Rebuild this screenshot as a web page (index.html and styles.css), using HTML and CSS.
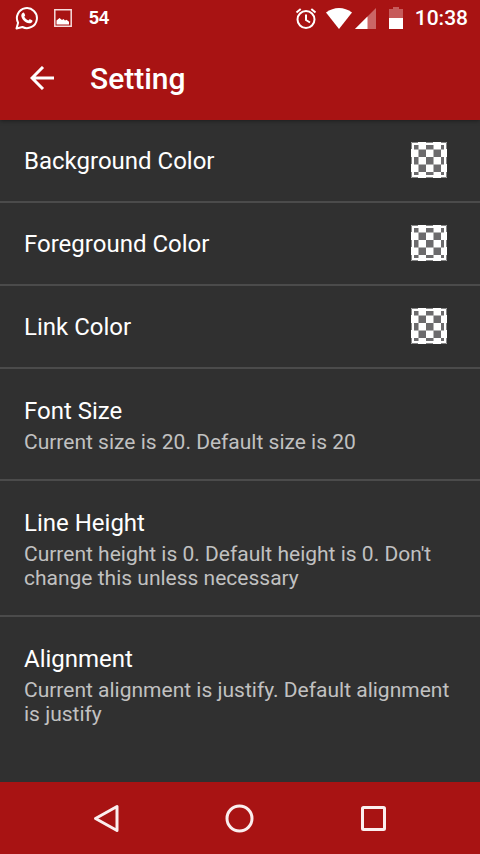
FILE: index.html
```html
<!DOCTYPE html>
<html lang="en">
<head>
<meta charset="utf-8">
<meta name="viewport" content="width=device-width, initial-scale=1">
<title>Setting</title>
<link rel="stylesheet" href="styles.css">
</head>
<body>
<svg class="defs" aria-hidden="true">
  <symbol id="checker" viewBox="0 0 36 36">
    <path fill="#fff" d="M0 0h36v36H0z"/>
    <path fill="#6c6b6d" d="M3 3h4v4H3zM15 3h7v4h-7zM30 3h3v4h-3zM8 8h7v7H8zM23 8h7v7h-7zM3 15h4v7H3zM15 15h7v7h-7zM30 15h3v7h-3zM8 23h7v7H8zM23 23h7v7h-7zM3 30h4v3H3zM15 30h7v3h-7zM30 30h3v3h-3z"/>
    <path fill="none" stroke="#b4b4b4" d="M7.500 3v30M22.500 3v30M3 7.500h30M3 22.500h30"/>
    <path fill="none" stroke="#858585" d="M.5 7V.5H7M15 .5h7M30 .5h5.500V7M.5 15v7M35.500 15v7M.5 30v5.500H7M15 35.500h7M30 35.500h5.500V30"/>
  </symbol>
</svg>

<header class="top">
  <div class="status">
    <div class="status-group status-left">
      <svg width="24" height="24" viewBox="0 0 24 24" aria-hidden="true">
        <path fill="none" stroke="#fff" stroke-width="2" stroke-linejoin="round" d="M1.500 22.500l1.600-5.700A10 10 0 1 1 7.400 21z"/>
        <path fill="#fff" d="M7.900 6.700c.5-.3 1-.2 1.300.4l.9 2c.2.400-.1.900-.8 1.600.9 1.800 2.200 3 4.100 3.800.8-1 1.200-1.400 1.600-1.200l2.100 1c.5.300.5.700.3 1.300-.5 1.300-1.800 1.900-3.200 1.700-4-.7-7.400-4-7.900-7.400-.1-1.300.6-2.500 1.600-3.200z"/>
      </svg>
      <svg width="18" height="18" viewBox="0 0 18 18" aria-hidden="true">
        <path fill="none" stroke="#f6dddd" stroke-width="1.500" d="M.8.800h16.400v16.400H.8z"/>
        <path fill="#fff" d="M2.500 15.500v-4l3-2.500 2.500 2 1.500-1 1.500 1.500 1.500-.7 2.500 2v2.700z"/>
      </svg>
      <span class="count">54</span>
    </div>
    <div class="status-group">
      <svg width="22" height="22" viewBox="0 0 22 22" aria-hidden="true">
        <g fill="none" stroke="#fff" stroke-width="2">
          <circle cx="11" cy="12.500" r="8.500"/>
          <path d="M1.500 5.500L5.700 2M20.500 5.500L16.300 2M11 7.500V13l4 2.500"/>
        </g>
      </svg>
      <svg class="wifi" width="26" height="21" viewBox="0 0 26 21" aria-hidden="true">
        <path fill="#fff" d="M0 4.500Q6 0 13 0t13 4.500L13 21z"/>
      </svg>
      <svg class="cell" width="21" height="21" viewBox="0 0 21 21" aria-hidden="true">
        <path fill="#cb6666" d="M21 0v21H0z"/>
        <path fill="#fff" d="M12.500 8.500V21H0z"/>
      </svg>
      <svg class="battery" width="14" height="22" viewBox="0 0 14 22" aria-hidden="true">
        <path fill="#c65b5b" d="M4 0h6v2h4v9H0V2h4z"/>
        <path fill="#fff" d="M0 11h14v11H0z"/>
      </svg>
      <time class="clock">10:38</time>
    </div>
  </div>
  <div class="appbar">
    <button class="back" type="button" aria-label="Back">
      <svg width="24" height="24" viewBox="0 0 24 24" aria-hidden="true">
        <path fill="none" stroke="#fff" stroke-width="3" d="M24 12H2M13 1L2 12l11 11"/>
      </svg>
    </button>
    <h1>Setting</h1>
  </div>
</header>

<main>
  <ul class="settings">
    <li><button class="row color-row" type="button"><span class="name">Background Color</span><svg class="swatch" aria-hidden="true"><use href="#checker"/></svg></button></li>
    <li><button class="row color-row" type="button"><span class="name">Foreground Color</span><svg class="swatch" aria-hidden="true"><use href="#checker"/></svg></button></li>
    <li><button class="row color-row" type="button"><span class="name">Link Color</span><svg class="swatch" aria-hidden="true"><use href="#checker"/></svg></button></li>
    <li><button class="row text-row" type="button"><span class="name">Font Size</span><span class="summary">Current size is 20. Default size is 20</span></button></li>
    <li><button class="row text-row" type="button"><span class="name">Line Height</span><span class="summary">Current height is 0. Default height is 0. Don't change this unless necessary</span></button></li>
    <li><button class="row text-row" type="button"><span class="name">Alignment</span><span class="summary">Current alignment is justify. Default alignment is justify</span></button></li>
  </ul>
</main>

<nav class="navbar" aria-label="System">
  <button type="button" aria-label="Back">
    <svg width="28" height="30" viewBox="0 0 28 30" aria-hidden="true">
      <path fill="none" stroke="#fbeeee" stroke-width="3" stroke-linejoin="round" d="M25 3.500v24L3.500 15.500z"/>
    </svg>
  </button>
  <button type="button" aria-label="Home">
    <svg width="30" height="30" viewBox="0 0 30 30" aria-hidden="true">
      <circle cx="14.500" cy="15.500" r="12.500" fill="none" stroke="#fbeeee" stroke-width="3"/>
    </svg>
  </button>
  <button type="button" aria-label="Recent apps">
    <svg width="28" height="28" viewBox="0 0 28 28" aria-hidden="true">
      <rect x="2.500" y="3.500" width="22" height="22" rx="1" fill="none" stroke="#fbeeee" stroke-width="3"/>
    </svg>
  </button>
</nav>
</body>
</html>
```
FILE: styles.css
```css
* {
  box-sizing: border-box;
}

body {
  margin: 0;
  min-height: 100vh;
  display: flex;
  flex-direction: column;
  background: #303030;
  color: #fff;
  font-family: Roboto, sans-serif;
}

button {
  margin: 0;
  padding: 0;
  border: 0;
  background: none;
  color: inherit;
  font: inherit;
  text-align: left;
  cursor: pointer;
}

svg {
  display: block;
  flex: none;
}

.defs {
  width: 0;
  height: 0;
  position: absolute;
}

.top {
  background: #a81313;
  box-shadow: 0 1px 4px rgba(0, 0, 0, 0.4);
}

.status {
  height: 36px;
  display: flex;
  align-items: center;
  justify-content: space-between;
  padding: 0 12px 0 15px;
}

.status-group {
  display: flex;
  align-items: center;
}

.status-left {
  gap: 15px;
}

.count {
  margin-left: 2px;
  font: bold 18px/20px "Liberation Sans", sans-serif;
}

.wifi {
  margin-left: 9px;
}

.cell {
  margin-left: 3px;
}

.battery {
  margin: 0 12px 0 13px;
}

.clock {
  font-size: 21px;
  line-height: 24px;
  font-weight: 500;
}

.appbar {
  height: 84px;
  display: flex;
  align-items: center;
  gap: 36px;
  padding: 0 30px;
}

h1 {
  margin: 0;
  font-size: 30px;
  line-height: 37px;
  font-weight: 500;
}

main {
  flex: 1;
}

.settings {
  margin: 0;
  padding: 0;
  list-style: none;
}

.settings li + li {
  border-top: 2px solid #4b4b4b;
}

.row {
  width: 100%;
  display: flex;
}

.color-row {
  align-items: flex-start;
  justify-content: space-between;
  padding: 22px 33px 20px 24px;
}

.text-row {
  flex-direction: column;
  gap: 5px;
  padding: 28px 24px 25px;
}

.name {
  font-size: 24px;
  line-height: 28px;
}

.color-row .name {
  line-height: 39px;
}

.summary {
  color: #c1c1c1;
  font-size: 21px;
  line-height: 24px;
}

.swatch {
  width: 36px;
  height: 36px;
}

.navbar {
  height: 72px;
  display: grid;
  grid-template-columns: repeat(3, 28%);
  justify-content: center;
  background: #a81313;
}

.navbar button {
  display: flex;
  align-items: center;
  justify-content: center;
}
```
